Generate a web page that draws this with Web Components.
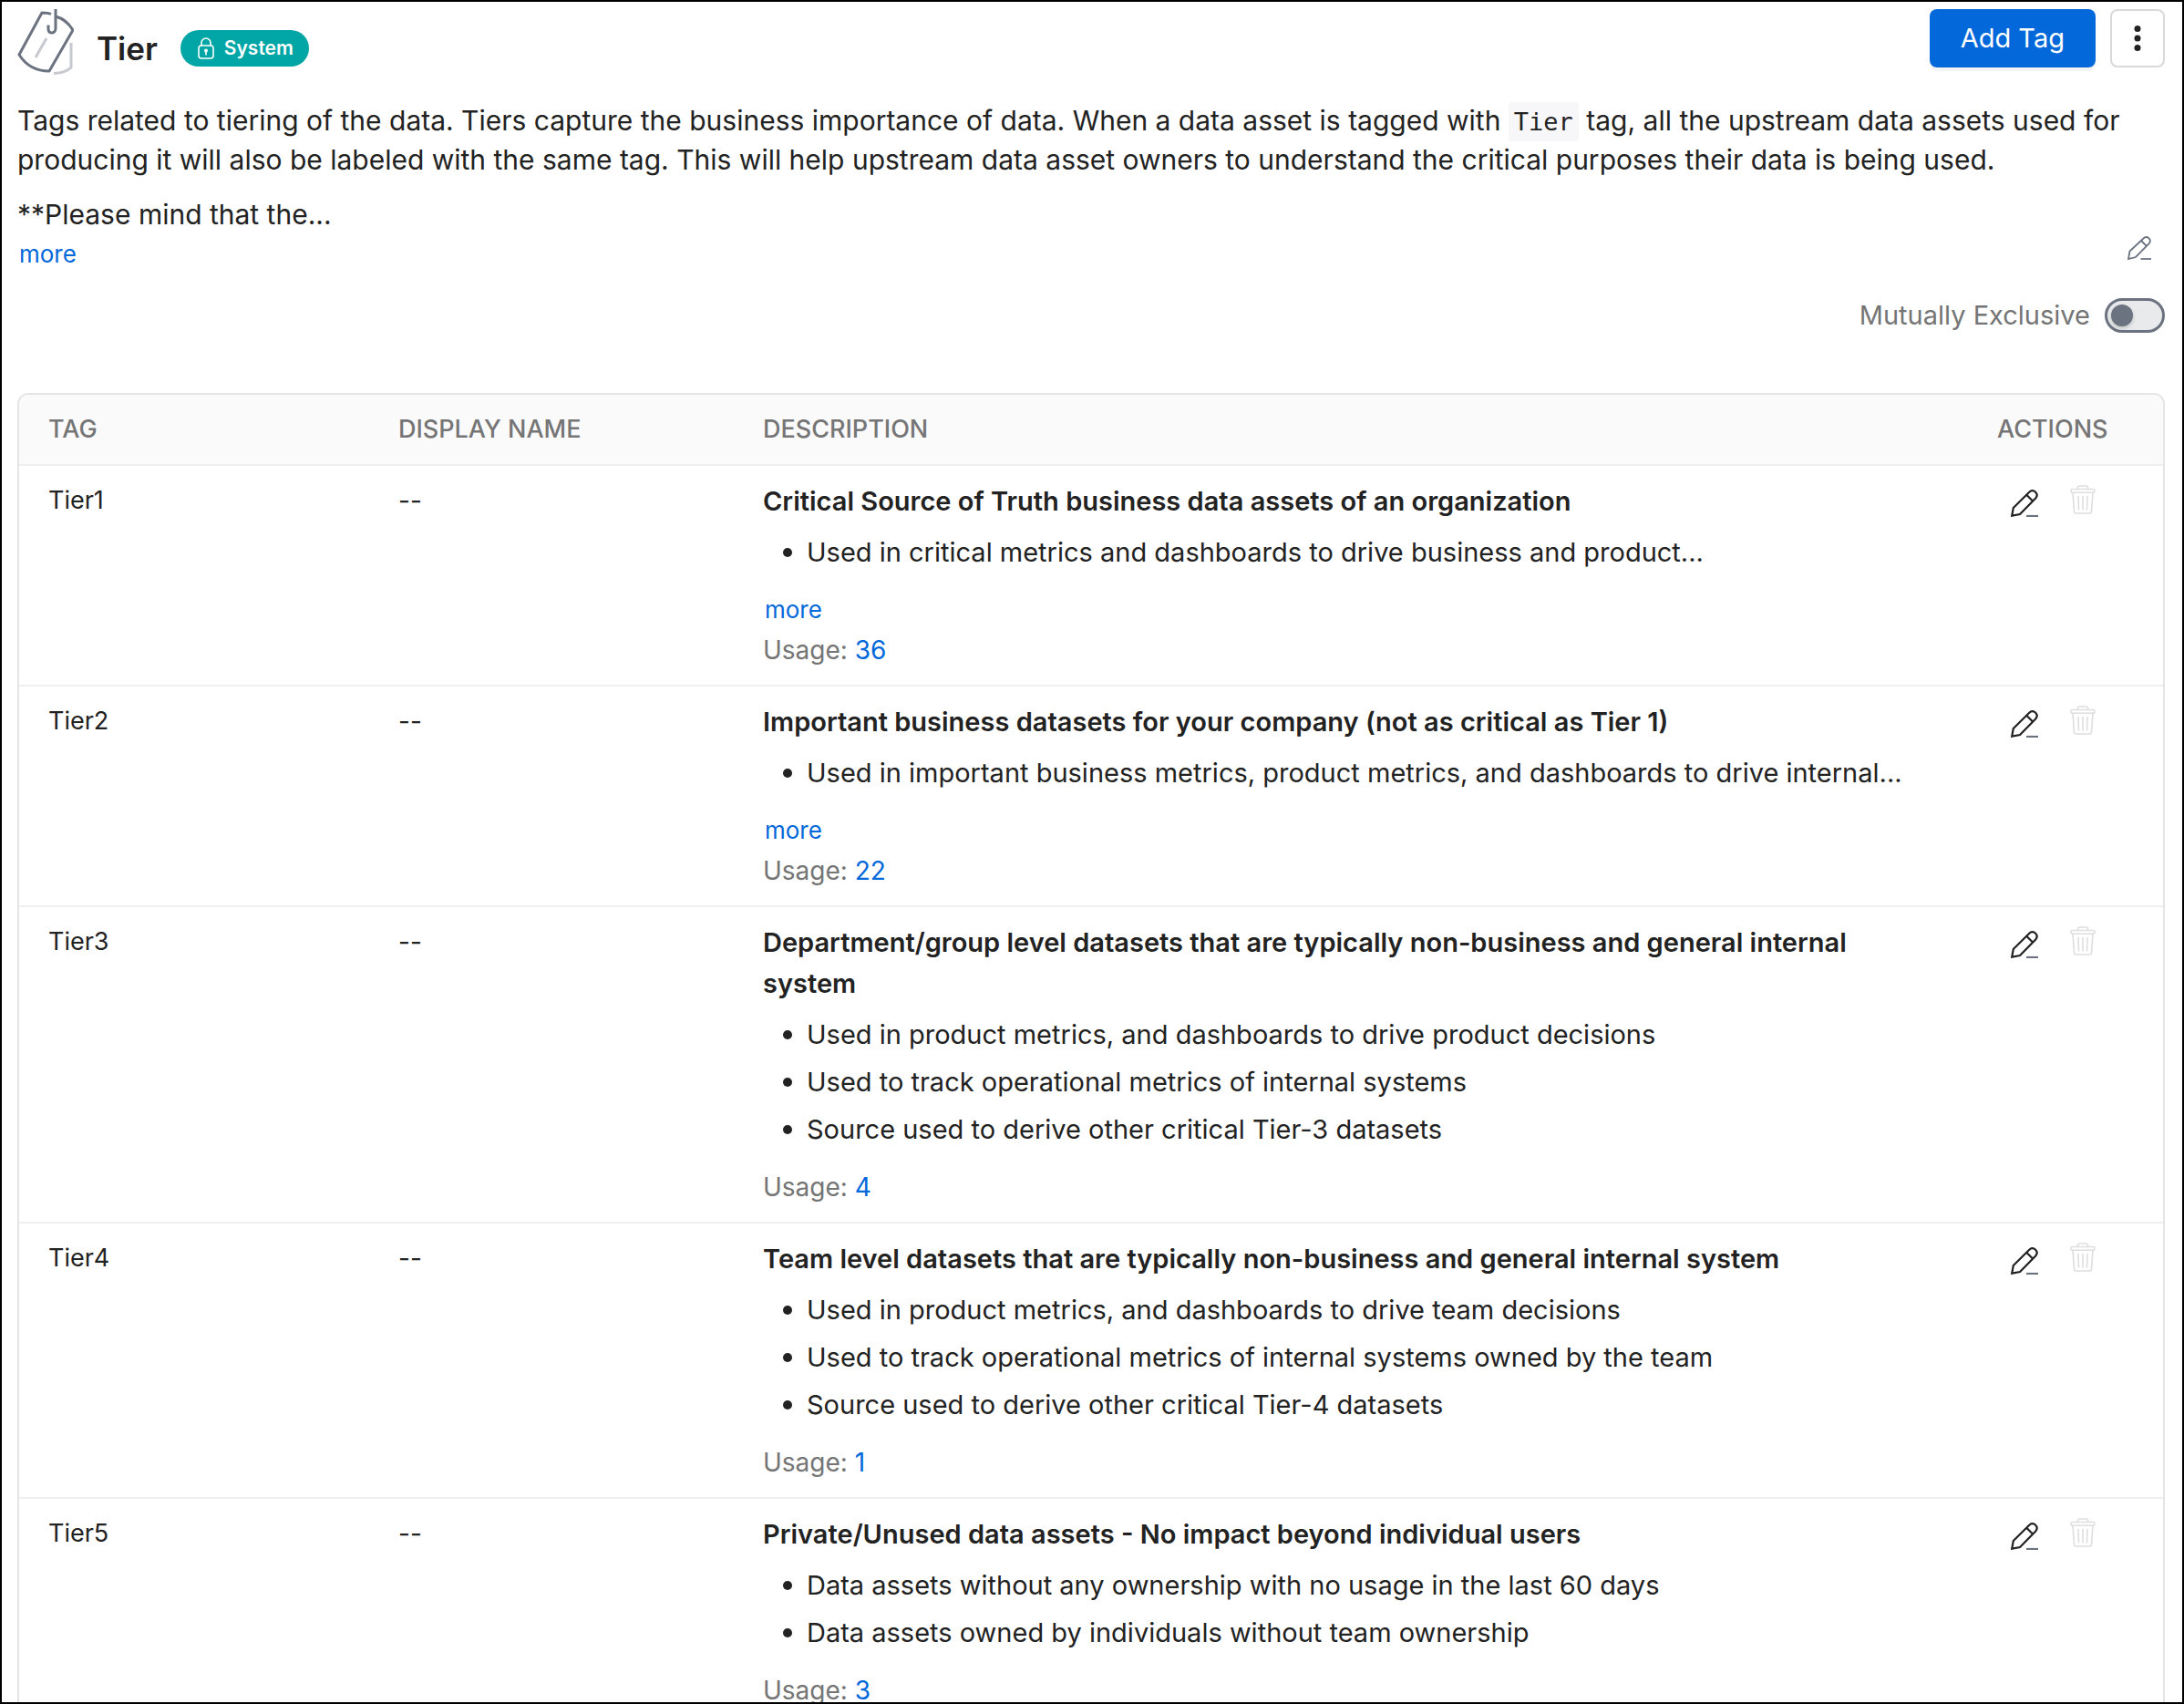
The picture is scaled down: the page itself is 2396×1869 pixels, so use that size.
<!DOCTYPE html>
<html lang="en">
<head>
<meta charset="utf-8">
<title>Tier</title>
<style>
  html, body { margin: 0; height: 100%; }
  body { font-family: Inter, "Open Sans", sans-serif; font-size: 28px; line-height: 44px; color: #222222; background: #ffffff; }
</style>
</head>
<body>
<tier-page></tier-page>

<template id="tpl-page">
  <style>
    :host { display: flex; flex-direction: column; box-sizing: border-box; height: 100vh; overflow: hidden; border: 2px solid #000; padding: 8px 19px 0 17px; }
    header { display: flex; justify-content: space-between; align-items: flex-start; height: 72px; flex: none; }
    .title { display: flex; align-items: center; height: 72px; }
    h1 { margin: 14px 25px 0; font-size: 35px; line-height: 44px; font-weight: 600; }
    system-badge { margin-top: 14px; }
    .actions { display: flex; gap: 16px; }
    tag-description { margin-top: 29px; }
    exclusive-switch { margin-top: 24px; }
    tier-table { margin-top: 63px; }
  </style>
  <header>
    <div class="title">
      <ui-icon name="tags"></ui-icon>
      <h1>Tier</h1>
      <system-badge>System</system-badge>
    </div>
    <div class="actions">
      <ui-button kind="primary">Add Tag</ui-button>
      <ui-button kind="menu" label="More actions"><ui-icon name="dots"></ui-icon></ui-button>
    </div>
  </header>
  <tag-description></tag-description>
  <exclusive-switch>Mutually Exclusive</exclusive-switch>
  <tier-table></tier-table>
</template>

<template id="tpl-badge">
  <style>
    :host { display: flex; align-items: center; gap: 11px; height: 40px; padding: 0 17px 0 19px; border-radius: 20px; background: #00a5a5; color: #fff; font-size: 21px; line-height: 28px; font-weight: 600; }
  </style>
  <ui-icon name="lock"></ui-icon><span><slot></slot></span>
</template>

<template id="tpl-button">
  <style>
    :host { display: block; }
    button { display: flex; align-items: center; justify-content: center; box-sizing: border-box; height: 64px; margin: 0; font: inherit; border-radius: 8px; cursor: pointer; }
    :host([kind="primary"]) button { border: 0; padding: 0 34px; background: #0368da; color: #fff; font-size: 29px; box-shadow: 0 4px 0 rgba(0,0,0,.045); }
    :host([kind="menu"]) button { width: 60px; padding: 0; background: #fff; border: 2px solid #d9d9d9; color: #222; }
  </style>
  <button type="button"><slot></slot></button>
</template>

<template id="tpl-description">
  <style>
    :host { display: flex; align-items: flex-end; }
    .text { flex: 1; font-size: 30px; line-height: 43px; }
    p { margin: 0 0 17px; }
    p.last { margin: 0; }
    code { font-family: "DejaVu Sans Mono", "Liberation Mono", monospace; font-size: 27px; line-height: 28px; background: #f7f7f9; border-radius: 4px; padding: 6px; }
    a { display: block; width: max-content; color: #0368da; text-decoration: none; font-size: 26px; line-height: 43px; padding-left: 2px; }
    button { flex: none; margin: 0 15px 15px 0; padding: 0; border: 0; background: none; color: #6b7280; cursor: pointer; display: flex; }
  </style>
  <div class="text">
    <p>Tags related to tiering of the data. Tiers capture the business importance of data. When a data asset is tagged with <code>Tier</code> tag, all the upstream data assets used for producing it will also be labeled with the same tag. This will help upstream data asset owners to understand the critical purposes their data is being used.</p>
    <p class="last">**Please mind that the...</p>
    <a href="#more">more</a>
  </div>
  <button type="button" aria-label="Edit description"><ui-icon name="edit-small"></ui-icon></button>
</template>

<template id="tpl-switch">
  <style>
    :host { display: flex; justify-content: flex-end; align-items: center; gap: 16px; color: #757575; font-size: 29px; }
    input { appearance: none; box-sizing: border-box; width: 66px; height: 38px; margin: 0; padding: 4px; border: 3px solid #6b7280; border-radius: 19px; background: #e9eaec; display: flex; align-items: center; cursor: pointer; }
    input::before { content: ""; width: 24px; height: 24px; border-radius: 50%; background: #6b7280; box-shadow: 0 2px 4px rgba(0,35,11,.2); }
    input:checked { justify-content: flex-end; }
  </style>
  <label for="exclusive"><slot></slot></label>
  <input id="exclusive" type="checkbox" role="switch">
</template>

<template id="tpl-table">
  <style>
    :host { display: block; flex: none; border: 2px solid #e5e5e5; border-radius: 12px; overflow: hidden; }
    table { width: 100%; border-collapse: separate; border-spacing: 0; table-layout: fixed; }
    .c-tag { width: 384px; } .c-name { width: 400px; } .c-act { width: 214px; }
    th { text-align: left; font-size: 27px; font-weight: 500; color: #757575; background: #fafafa; padding: 16px 32px; }
    td { vertical-align: top; padding: 16px 32px; }
    td:first-child { font-size: 27px; }
    th, td { border-bottom: 2px solid #efefef; }
    h2 { margin: 0 0 12px; font-size: 29px; line-height: 45px; font-weight: 600; }
    ul { list-style: none; margin: 0 0 19px; padding: 0 0 0 22px; font-size: 29px; }
    li { display: flex; align-items: center; gap: 16px; }
    li::before { content: ""; flex: none; width: 10px; height: 10px; border-radius: 50%; background: currentColor; }
    li + li { margin-top: 8px; }
    .more { display: block; width: max-content; font-size: 26px; padding-left: 2px; }
    a { color: #0368da; text-decoration: none; }
    .usage { color: #757575; }
    .icons { display: flex; gap: 35px; padding: 5px 0 0 15px; align-items: flex-start; }
    .icons button { display: flex; margin: 0; padding: 0; border: 0; background: none; color: #222; cursor: pointer; }
    .icons .edit { padding-top: 5px; }
    .icons button:disabled { color: #dedede; }
  </style>
  <table>
    <colgroup><col class="c-tag"><col class="c-name"><col><col class="c-act"></colgroup>
    <thead><tr><th>TAG</th><th>DISPLAY NAME</th><th>DESCRIPTION</th><th>ACTIONS</th></tr></thead>
    <tbody></tbody>
  </table>
</template>

<script>
const ICONS = {
  tags: [62, 72, `<g fill="none" stroke-width="3"><g stroke="#c6c9cf"><path d="M32 32 20 53M59 37v27c-4 4-10 6-19 6.500"/></g><g stroke="#6b7280" stroke-linejoin="round"><path d="M37 5.500C34 4 31 4 27 4L2 50c7 11 17 18 33 18L61 23C56 15 50 10 42 8"/><path d="M42 0v21c0 3-2 5-4.500 5S34 23.500 34 21v-3.500"/></g></g>`],
  lock: [18, 24, `<g fill="none" stroke="#fff" stroke-width="1.600"><rect x="1" y="9" width="16" height="14" rx="3"/><path d="M4 9V6a5 5 0 0 1 10 0v3"/></g><circle cx="9" cy="14.500" r="2" fill="#fff"/><path d="M9 14.500v5" stroke="#fff" stroke-width="1.600"/>`],
  dots: [8, 30, `<g fill="currentColor"><circle cx="4" cy="4.500" r="3.500"/><circle cx="4" cy="15" r="3.500"/><circle cx="4" cy="25.500" r="3.500"/></g>`],
  "edit-small": [26, 26, `<g fill="none" stroke="currentColor" stroke-width="1.800"><path d="M1 25 2.500 16.500 17.500 2.500c2-2 4-1.900 5.800-.4 1.800 1.700 2 4 .3 6L9 23 1 25ZM15 5l6 6"/><path d="M14.500 25H26"/></g>`],
  edit: [30, 30, `<g fill="none" stroke-width="2.200"><path stroke="currentColor" d="M1.200 28.700 2.800 20 20 3c2.300-2.300 4.900-2.200 6.900-.5 2.100 2 2.300 4.700.3 7L10 27 1.200 28.700ZM17.500 6l7 7"/><path stroke="#6b7280" d="M17 29H30"/></g>`],
  trash: [28, 32, `<g fill="none" stroke="currentColor" stroke-width="1.600" stroke-linejoin="round" stroke-linecap="round"><rect x="1" y="4.500" width="26" height="3.800" rx="1.500"/><path d="M8.500 4.500V3c0-1.200.8-2 2-2h7c1.200 0 2 .8 2 2v1.500M3 8.300 4.500 29c.1 1.200.9 2 2 2h15c1.100 0 1.900-.8 2-2L25 8.300M9 12.500 9.500 27M14 12.500V27M19 12.500 18.500 27"/></g>`]
};

const ROWS = [
  { tag: "Tier1", title: "Critical Source of Truth business data assets of an organization", items: ["Used in critical metrics and dashboards to drive business and product..."], more: true, usage: 36 },
  { tag: "Tier2", title: "Important business datasets for your company (not as critical as Tier 1)", items: ["Used in important business metrics, product metrics, and dashboards to drive internal..."], more: true, usage: 22 },
  { tag: "Tier3", title: "Department/group level datasets that are typically non-business and general internal system", items: ["Used in product metrics, and dashboards to drive product decisions", "Used to track operational metrics of internal systems", "Source used to derive other critical Tier-3 datasets"], usage: 4 },
  { tag: "Tier4", title: "Team level datasets that are typically non-business and general internal system", items: ["Used in product metrics, and dashboards to drive team decisions", "Used to track operational metrics of internal systems owned by the team", "Source used to derive other critical Tier-4 datasets"], usage: 1 },
  { tag: "Tier5", title: "Private/Unused data assets - No impact beyond individual users", items: ["Data assets without any ownership with no usage in the last 60 days", "Data assets owned by individuals without team ownership"], usage: 3 }
];

class TemplateElement extends HTMLElement {
  constructor() {
    super();
    this.attachShadow({ mode: "open" });
    this.shadowRoot.append(document.getElementById(this.constructor.template).content.cloneNode(true));
  }
}

class UiIcon extends HTMLElement {
  connectedCallback() {
    if (this.shadowRoot) return;
    const [w, h, body] = ICONS[this.getAttribute("name")];
    this.attachShadow({ mode: "open" }).innerHTML =
      `<style>:host{display:block;flex:none}svg{display:block}</style><svg width="${w}" height="${h}" viewBox="0 0 ${w} ${h}" aria-hidden="true">${body}</svg>`;
  }
}
class SystemBadge extends TemplateElement { static template = "tpl-badge"; }
class UiButton extends TemplateElement {
  static template = "tpl-button";
  connectedCallback() {
    const label = this.getAttribute("label");
    if (label) this.shadowRoot.querySelector("button").setAttribute("aria-label", label);
  }
}
class TagDescription extends TemplateElement { static template = "tpl-description"; }
class ExclusiveSwitch extends TemplateElement { static template = "tpl-switch"; }
class TierTable extends TemplateElement {
  static template = "tpl-table";
  connectedCallback() {
    this.shadowRoot.querySelector("tbody").innerHTML = ROWS.map(r => `<tr>
      <td>${r.tag}</td><td>--</td>
      <td><h2>${r.title}</h2><ul>${r.items.map(i => `<li>${i}</li>`).join("")}</ul>${r.more ? '<a class="more" href="#more">more</a>' : ""}<div class="usage">Usage: <a href="#usage">${r.usage}</a></div></td>
      <td><div class="icons"><button class="edit" type="button" aria-label="Edit ${r.tag}"><ui-icon name="edit"></ui-icon></button><button type="button" disabled aria-label="Delete ${r.tag}"><ui-icon name="trash"></ui-icon></button></div></td>
    </tr>`).join("");
  }
}
class TierPage extends TemplateElement { static template = "tpl-page"; }

customElements.define("ui-icon", UiIcon);
customElements.define("system-badge", SystemBadge);
customElements.define("ui-button", UiButton);
customElements.define("tag-description", TagDescription);
customElements.define("exclusive-switch", ExclusiveSwitch);
customElements.define("tier-table", TierTable);
customElements.define("tier-page", TierPage);
</script>
</body>
</html>
